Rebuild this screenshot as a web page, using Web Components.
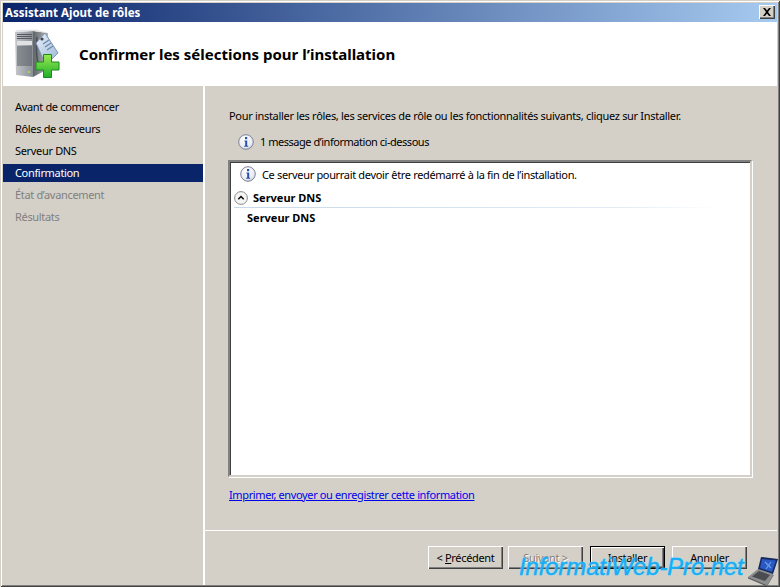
<!DOCTYPE html>
<html lang="fr"><head><meta charset="utf-8"><title>Assistant Ajout de rôles</title>
<style>
html,body{margin:0;padding:0;background:#d4d0c8}
body{font:11px "Noto Sans","DejaVu Sans",sans-serif;letter-spacing:-.33px;color:#000;width:780px;height:587px;overflow:hidden}
</style></head><body>
<wizard-window>
  <span slot="title">Assistant Ajout de rôles</span>
  <wizard-header slot="header">Confirmer les sélections pour l’installation</wizard-header>
  <wizard-nav slot="nav">
    <nav-step>Avant de commencer</nav-step>
    <nav-step>Rôles de serveurs</nav-step>
    <nav-step>Serveur DNS</nav-step>
    <nav-step state="active">Confirmation</nav-step>
    <nav-step state="disabled">État d’avancement</nav-step>
    <nav-step state="disabled">Résultats</nav-step>
  </wizard-nav>
  <confirm-page slot="main"></confirm-page>
  <button-bar slot="footer">
    <win-button><span>&lt; <u>P</u>récédent</span></win-button>
    <win-button disabled>Suivant &gt;</win-button>
    <win-button default>Installer</win-button>
    <win-button>Annuler</win-button>
  </button-bar>
</wizard-window>
<site-watermark></site-watermark>
<script>
const INFO=`<svg width="16" height="16" viewBox="0 0 16 16" style="display:block;flex:none"><defs><radialGradient id="ig" cx=".4" cy=".3" r=".8"><stop offset="0" stop-color="#fff"/><stop offset=".7" stop-color="#e9eaf2"/><stop offset="1" stop-color="#b9bfd4"/></radialGradient></defs><circle cx="8" cy="8" r="7.3" fill="url(#ig)" stroke="#7d8398"/><rect x="7" y="3" width="2.2" height="2.2" fill="#2a4fa8"/><path d="M6.4 6.6h2.8v5.2h1v1H6.2v-1h1V7.6h-.8z" fill="#2a4fa8"/></svg>`;
function def(name,html){customElements.define(name,class extends HTMLElement{constructor(){super();this.attachShadow({mode:'open'}).innerHTML=html;}});}
def('wizard-window',`<style>
:host{display:flex;flex-direction:column;box-sizing:border-box;width:780px;height:587px;padding:3px 3px 2px 3px;background:#d4d0c8;box-shadow:inset 1px 1px 0 #d4d0c8,inset -1px -1px 0 #404040,inset 2px 2px 0 #fff,inset -2px -2px 0 #808080}
.title{height:19px;flex:none;box-sizing:border-box;display:flex;align-items:center;justify-content:space-between;padding:0 2px 1px 2px;background:linear-gradient(90deg,#0a246a,#a6caf0);color:#fff;font:bold 11.5px "Noto Sans","DejaVu Sans",sans-serif;letter-spacing:0}
.close{width:16px;height:14px;box-sizing:border-box;background:#d4d0c8;box-shadow:inset 1px 1px 0 #fff,inset -1px -1px 0 #404040,inset -2px -2px 0 #808080;display:flex;align-items:center;justify-content:center}
.body{flex:1;display:flex;min-height:0}
.main{flex:1;display:flex;flex-direction:column;border-left:2px solid #fff;min-width:0}
</style>
<div class="title"><slot name="title"></slot><div class="close"><svg width="10" height="8" viewBox="0 0 10 8"><path d="M1 0h2l2 2.400L7 0h2L6 4l3 4H7L5 5.600 3 8H1l3-4z" fill="#000"/></svg></div></div>
<slot name="header"></slot>
<div class="body"><slot name="nav"></slot><div class="main"><slot name="main"></slot><slot name="footer"></slot></div></div>`);
def('wizard-header',`<style>
:host{display:flex;align-items:center;height:64px;flex:none;background:#fff;padding-left:11px;gap:19px;box-sizing:border-box}
.t{font:bold 15px "Noto Sans","DejaVu Sans",sans-serif;letter-spacing:0;color:#000}
svg{display:block;flex:none}
</style>
<svg width="46" height="50" viewBox="0 0 46 50">
<defs><linearGradient id="sf" x1="0" x2="1"><stop offset="0" stop-color="#c4c7cb"/><stop offset="1" stop-color="#8a9096"/></linearGradient>
<linearGradient id="ss" x1="0" x2="1"><stop offset="0" stop-color="#5f6469"/><stop offset="1" stop-color="#b4b8bc"/></linearGradient>
<linearGradient id="gr" x1="0" y1="0" x2="0" y2="1"><stop offset="0" stop-color="#9ae94e"/><stop offset="1" stop-color="#1fae2c"/></linearGradient>
<linearGradient id="tg" x1="0" y1="0" x2="1" y2="1"><stop offset="0" stop-color="#e8f0fa"/><stop offset="1" stop-color="#9db8d8"/></linearGradient></defs>
<path d="M1 3L19 2L19 48L2 46z" fill="url(#sf)"/>
<path d="M19 2L34 4L34 40L19 48z" fill="url(#ss)"/>
<path d="M1 3L19 2L34 4L22 0.500L3 1z" fill="#e2e4e6"/>
<path d="M3 5.500h15M3 7.500h15M3 9.500h15M3 18h15M3 20h15M3 22h15M3 24h15M3 26h15M3 28h15M3 30h15M3 32h15M3 34h15M3 36h15" stroke="#555a60"/>
<rect x="3" y="12" width="15" height="4" fill="#dfe1e3"/>
<rect x="14" y="42" width="2" height="2" fill="#9fdc3c"/>
<path d="M23 8C22 20 22 30 25 36" stroke="#4a4f55" stroke-width="1.500" fill="none"/>
<path d="M22 14L31 4L44 24L36 32L29 30z" fill="url(#tg)" stroke="#7d94ae"/>
<path d="M29 15l6-4M31 18l6-4M33 21l6-4" stroke="#6d86a8" stroke-width="1.200"/>
<circle cx="28" cy="10" r="1.600" fill="#445"/>
<path d="M29.500 25.500h8v7.500h7.500v8h-7.500v7.500h-8v-7.500h-7.500v-8h7.500z" fill="url(#gr)" stroke="#1a8a20"/>
</svg>
<div class="t"><slot></slot></div>`);
def('wizard-nav',`<style>:host{display:flex;flex-direction:column;width:200px;flex:none;padding-top:12px;gap:4px;box-sizing:border-box}</style><slot></slot>`);
def('nav-step',`<style>
:host{display:block;height:18px;line-height:18px;padding-left:12px;white-space:nowrap}
:host([state=active]){background:#0a246a;color:#fff}
:host([state=disabled]){color:#808080}
</style><slot></slot>`);
def('info-line',`<style>:host{display:flex;align-items:center;gap:6px}</style>${INFO}<span><slot></slot></span>`);
def('confirm-page',`<style>
:host{display:flex;flex-direction:column;flex:none;height:445px;box-sizing:border-box;padding:21px 25px 0 24px;border-bottom:1px solid #fff}
p{margin:0;height:18px;line-height:18px;white-space:nowrap;letter-spacing:-.31px}
info-line.top{margin:8px 0 0 9px;height:18px;letter-spacing:-.47px;line-height:16px}
.box{margin:9px 0 0 -1px;height:317px;flex:none;box-sizing:border-box;background:#fff;border:2px solid;border-color:#808080 #d4d0c8 #d4d0c8 #808080;box-shadow:inset 1px 1px 0 #404040,1px 1px 0 #fff;padding:3px 0 0 4px}
.box info-line{margin-left:6px;height:18px}
.head{display:flex;align-items:center;gap:5px;font-weight:bold;letter-spacing:0;height:19px;margin-top:5px}
.rule{height:1px;margin:0 30px 0 0;background:linear-gradient(90deg,#c6d8ea,#e2ecf5 80%,#fff)}
.sub{font-weight:bold;letter-spacing:0;margin:1px 0 0 13px;height:18px;line-height:18px}
a{display:block;margin-top:9px;color:#0000ee;text-decoration:underline;white-space:nowrap;line-height:18px;letter-spacing:-.37px}
</style>
<p>Pour installer les rôles, les services de rôle ou les fonctionnalités suivants, cliquez sur Installer.</p>
<info-line class="top">1 message d’information ci-dessous</info-line>
<div class="box">
<info-line>Ce serveur pourrait devoir être redémarré à la fin de l’installation.</info-line>
<div class="head"><svg width="14" height="14" viewBox="0 0 14 14" style="display:block"><circle cx="7" cy="7" r="6.400" fill="#f4f4f4" stroke="#8c8c8c"/><path d="M4.300 8.200L7 5.500l2.700 2.700" fill="none" stroke="#000" stroke-width="1.400"/></svg><span>Serveur DNS</span></div>
<div class="rule"></div>
<div class="sub">Serveur DNS</div>
</div>
<a href="#">Imprimer, envoyer ou enregistrer cette information</a>`);
def('button-bar',`<style>:host{display:flex;flex:1;align-items:flex-start;box-sizing:border-box;padding:15px 0 0 223px}
::slotted(win-button:nth-child(2)){margin-left:5px}::slotted(win-button:nth-child(3)){margin-left:7px}::slotted(win-button:nth-child(4)){margin-left:7px}</style><slot></slot>`);
def('win-button',`<style>
:host{display:flex;align-items:center;justify-content:center;width:75px;height:23px;flex:none;box-sizing:border-box;background:#d4d0c8;box-shadow:inset 1px 1px 0 #fff,inset -1px -1px 0 #404040,inset -2px -2px 0 #808080;white-space:nowrap}
:host([disabled]){color:#808080;text-shadow:1px 1px 0 #fff}
:host([default]){box-shadow:inset 0 0 0 1px #000,inset 2px 2px 0 #fff,inset -2px -2px 0 #404040,inset -3px -3px 0 #808080}
</style><slot></slot>`);
def('site-watermark',`<style>
:host{position:absolute;left:519px;top:554px;display:block;width:261px;height:33px}
.t{position:absolute;left:0;top:0;font:italic 23.700px "Liberation Sans",sans-serif;color:#18aef6;-webkit-text-stroke:.4px #18aef6;white-space:nowrap;letter-spacing:0;text-shadow:0 0 2px #7fe4ff}
svg{position:absolute;left:228px;top:0}
</style>
<svg width="33" height="33" viewBox="0 0 33 33"><path d="M14 3L32 5L27 21L20 32L1 24L11 15z" fill="#9a9c9e" opacity="0"/><path d="M1 23L11 15L26 20L20 31z" fill="#8b8d8f"/><path d="M5 22.500L12 17L23 21L18 27z" fill="#4a4c4f"/><path d="M1 23L20 31L20 32.500L1 24.500z" fill="#5b5d5f"/><path d="M20 31L26 20L26.500 21.500L20 32.500z" fill="#6d6f71"/><path d="M14 3L31 5L26 20L11 15z" fill="#14285e"/><path d="M15 5L29 6.500L25 18L13 14z" fill="#2a59c4"/><path d="M18 8l6 6M24 8l-5 7" stroke="#6fa0ea" stroke-width="1.200"/></svg>
<div class="t">InformatiWeb-Pro.net</div>`);
</script></body></html>
